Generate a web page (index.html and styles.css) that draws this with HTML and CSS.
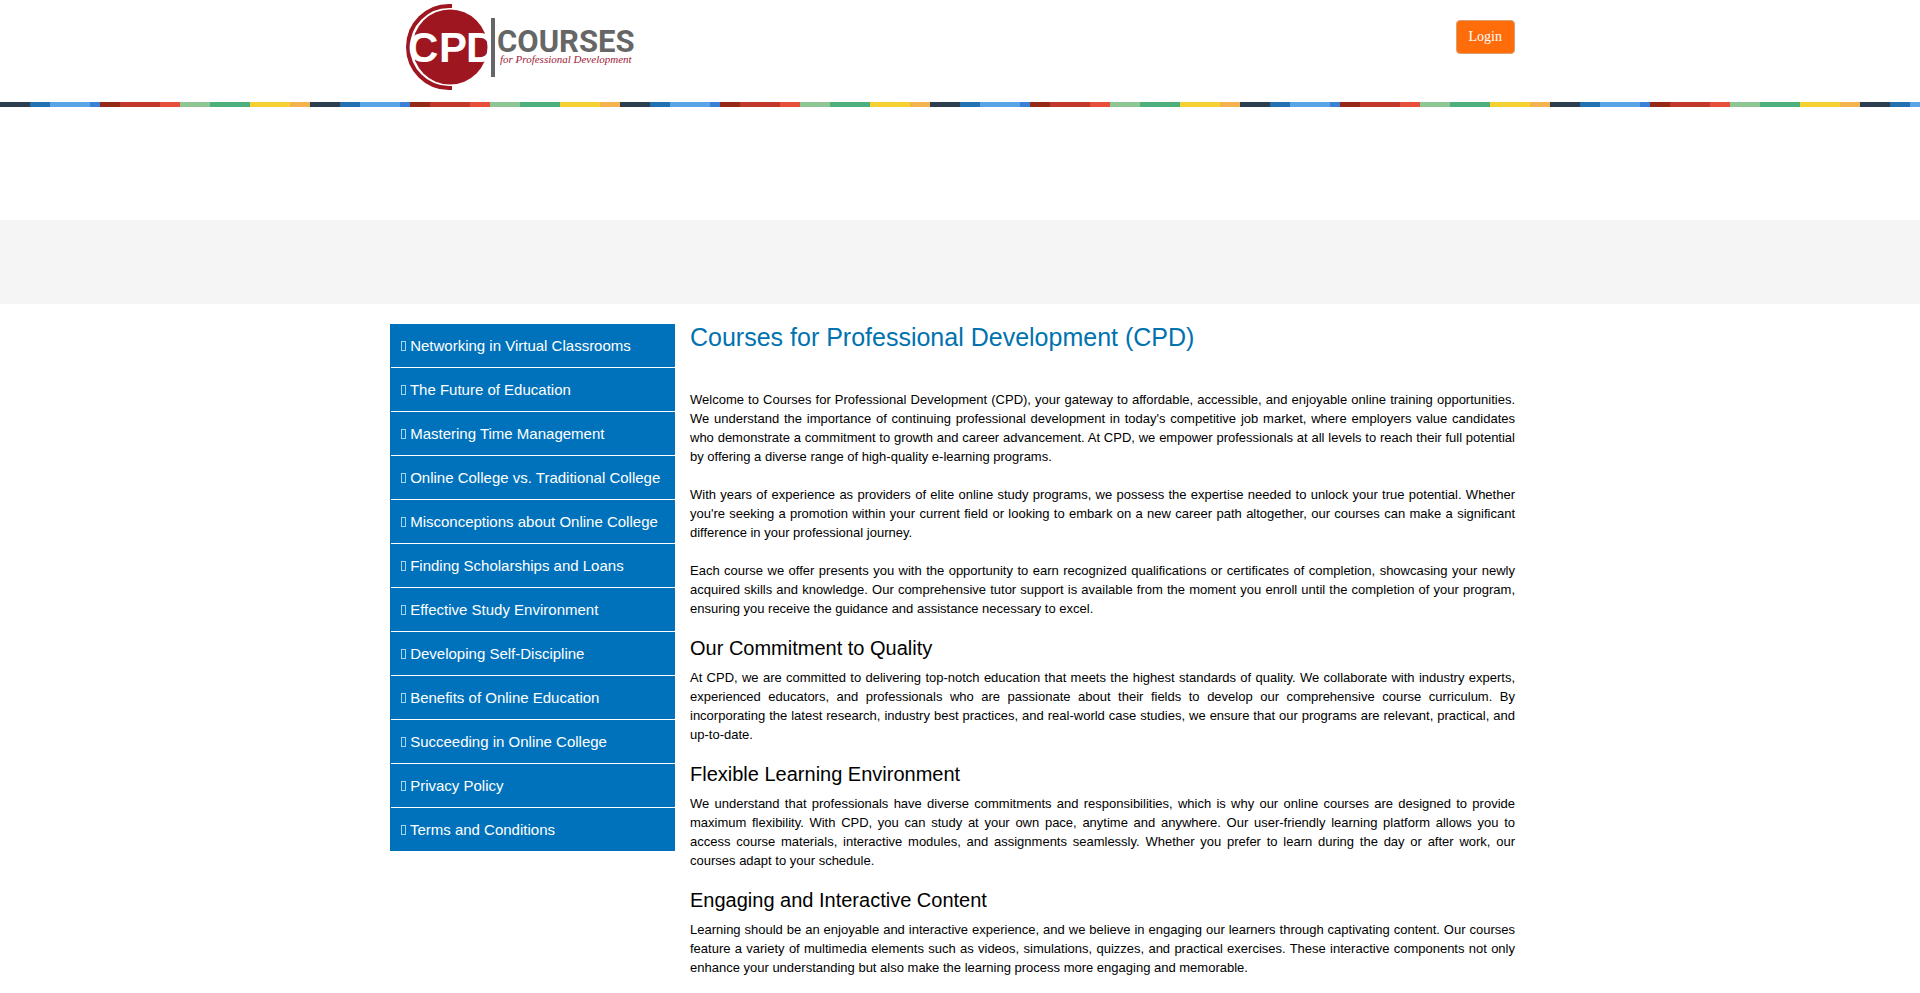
FILE: index.html
```html
<!DOCTYPE html>
<html lang="en">
<head>
<meta charset="utf-8">
<title>Courses for Professional Development (CPD)</title>
<link rel="stylesheet" href="styles.css">
</head>
<body>
<header class="site-header">
  <div class="container header-row">
    <a class="logo" href="#" aria-label="CPD Courses for Professional Development">
      <svg width="244" height="94" viewBox="0 0 244 94">
        <circle class="logo-red" cx="53" cy="47" r="37.5"/>
        <path class="logo-arc" d="M55 6H52A41 41 0 0 0 52 88H55"/>
        <text class="logo-cpd" x="11 42 69" y="62">CPD</text>
        <rect class="logo-bar" x="94" y="18" width="4" height="59"/>
        <text class="logo-courses" x="100" y="52">COURSES</text>
        <text class="logo-tag" x="103" y="63">for Professional Development</text>
      </svg>
    </a>
    <button class="login" type="button">Login</button>
  </div>
</header>
<div class="stripe"></div>
<div class="band"></div>
<div class="container columns">
  <nav class="side">
    <a href="#"><span class="mark"></span> Networking in Virtual Classrooms</a>
    <a href="#"><span class="mark"></span> The Future of Education</a>
    <a href="#"><span class="mark"></span> Mastering Time Management</a>
    <a href="#"><span class="mark"></span> Online College vs. Traditional College</a>
    <a href="#"><span class="mark"></span> Misconceptions about Online College</a>
    <a href="#"><span class="mark"></span> Finding Scholarships and Loans</a>
    <a href="#"><span class="mark"></span> Effective Study Environment</a>
    <a href="#"><span class="mark"></span> Developing Self-Discipline</a>
    <a href="#"><span class="mark"></span> Benefits of Online Education</a>
    <a href="#"><span class="mark"></span> Succeeding in Online College</a>
    <a href="#"><span class="mark"></span> Privacy Policy</a>
    <a href="#"><span class="mark"></span> Terms and Conditions</a>
  </nav>
  <main class="content">
    <h1>Courses for Professional Development (CPD)</h1>
    <p>Welcome to Courses for Professional Development (CPD), your gateway to affordable, accessible, and enjoyable online training opportunities. We understand the importance of continuing professional development in today's competitive job market, where employers value candidates who demonstrate a commitment to growth and career advancement. At CPD, we empower professionals at all levels to reach their full potential by offering a diverse range of high-quality e-learning programs.</p>
    <p>With years of experience as providers of elite online study programs, we possess the expertise needed to unlock your true potential. Whether you're seeking a promotion within your current field or looking to embark on a new career path altogether, our courses can make a significant difference in your professional journey.</p>
    <p>Each course we offer presents you with the opportunity to earn recognized qualifications or certificates of completion, showcasing your newly acquired skills and knowledge. Our comprehensive tutor support is available from the moment you enroll until the completion of your program, ensuring you receive the guidance and assistance necessary to excel.</p>
    <h2>Our Commitment to Quality</h2>
    <p>At CPD, we are committed to delivering top-notch education that meets the highest standards of quality. We collaborate with industry experts, experienced educators, and professionals who are passionate about their fields to develop our comprehensive course curriculum. By incorporating the latest research, industry best practices, and real-world case studies, we ensure that our programs are relevant, practical, and up-to-date.</p>
    <h2>Flexible Learning Environment</h2>
    <p>We understand that professionals have diverse commitments and responsibilities, which is why our online courses are designed to provide maximum flexibility. With CPD, you can study at your own pace, anytime and anywhere. Our user-friendly learning platform allows you to access course materials, interactive modules, and assignments seamlessly. Whether you prefer to learn during the day or after work, our courses adapt to your schedule.</p>
    <h2>Engaging and Interactive Content</h2>
    <p>Learning should be an enjoyable and interactive experience, and we believe in engaging our learners through captivating content. Our courses feature a variety of multimedia elements such as videos, simulations, quizzes, and practical exercises. These interactive components not only enhance your understanding but also make the learning process more engaging and memorable.</p>
  </main>
</div>
</body>
</html>
```
FILE: styles.css
```css
* { box-sizing: border-box; }
body {
  margin: 0;
  background: #fff;
  color: #000;
  font: 13px/19px "Liberation Sans", Arial, sans-serif;
}
.container {
  max-width: 1140px;
  margin: 0 auto;
  padding-right: 15px;
}
.header-row {
  display: flex;
  justify-content: space-between;
  align-items: flex-start;
  padding-bottom: 8px;
}
.logo { margin-left: 7px; }
.logo svg { display: block; }
.logo-red { fill: #9d1620; }
.logo-arc { fill: none; stroke: #9d1620; stroke-width: 4; }
.logo-cpd { fill: #fff; font: bold 42px "Liberation Sans", Arial, sans-serif; }
.logo-bar { fill: #666; }
.logo-courses { fill: #666; font: bold 31px Roboto, sans-serif; }
.logo-tag { fill: #a02038; font: italic 11px "Liberation Serif", serif; }
.login {
  margin-top: 20px;
  padding: 6px 12px;
  border: 1px solid #dca070;
  border-radius: 4px;
  background: #ff6c0a;
  color: #fff;
  font: 14px/20px "Liberation Serif", "Times New Roman", serif;
}
.stripe {
  height: 5px;
  background: repeating-linear-gradient(90deg,
    #2c3e50 0 30px, #2271b1 30px 50px, #5aa5e6 50px 90px, #3b7fd6 90px 100px,
    #962817 100px 120px, #c0392b 120px 160px, #e74f3a 160px 180px,
    #90c695 180px 210px, #4daf7c 210px 250px, #f4d030 250px 290px, #f5b350 290px 310px);
}
.band {
  height: 84px;
  margin-top: 113px;
  background: #f5f5f5;
}
.columns {
  display: grid;
  grid-template-columns: 285px minmax(0, 1fr);
  column-gap: 15px;
  align-items: start;
  padding-top: 20px;
}
.side {
  border-left: 1px solid #0072bc;
  background: #0072bc;
}
.side a {
  display: block;
  padding: 11px 10px;
  color: #fff;
  font-size: 15px;
  line-height: 21px;
  text-decoration: none;
}
.side a + a { border-top: 1px solid #fff; }
.mark {
  display: inline-block;
  width: 5px;
  height: 10px;
  border: 1px solid #9fd6f5;
}
.content { text-align: justify; }
h1 {
  margin: 0 0 39px;
  color: #0072b0;
  font-size: 25px;
  font-weight: 400;
  line-height: 27px;
}
h2 {
  margin: 0 0 9px;
  font-size: 20px;
  font-weight: 400;
  line-height: 22px;
}
p { margin: 0 0 19px; }
```
